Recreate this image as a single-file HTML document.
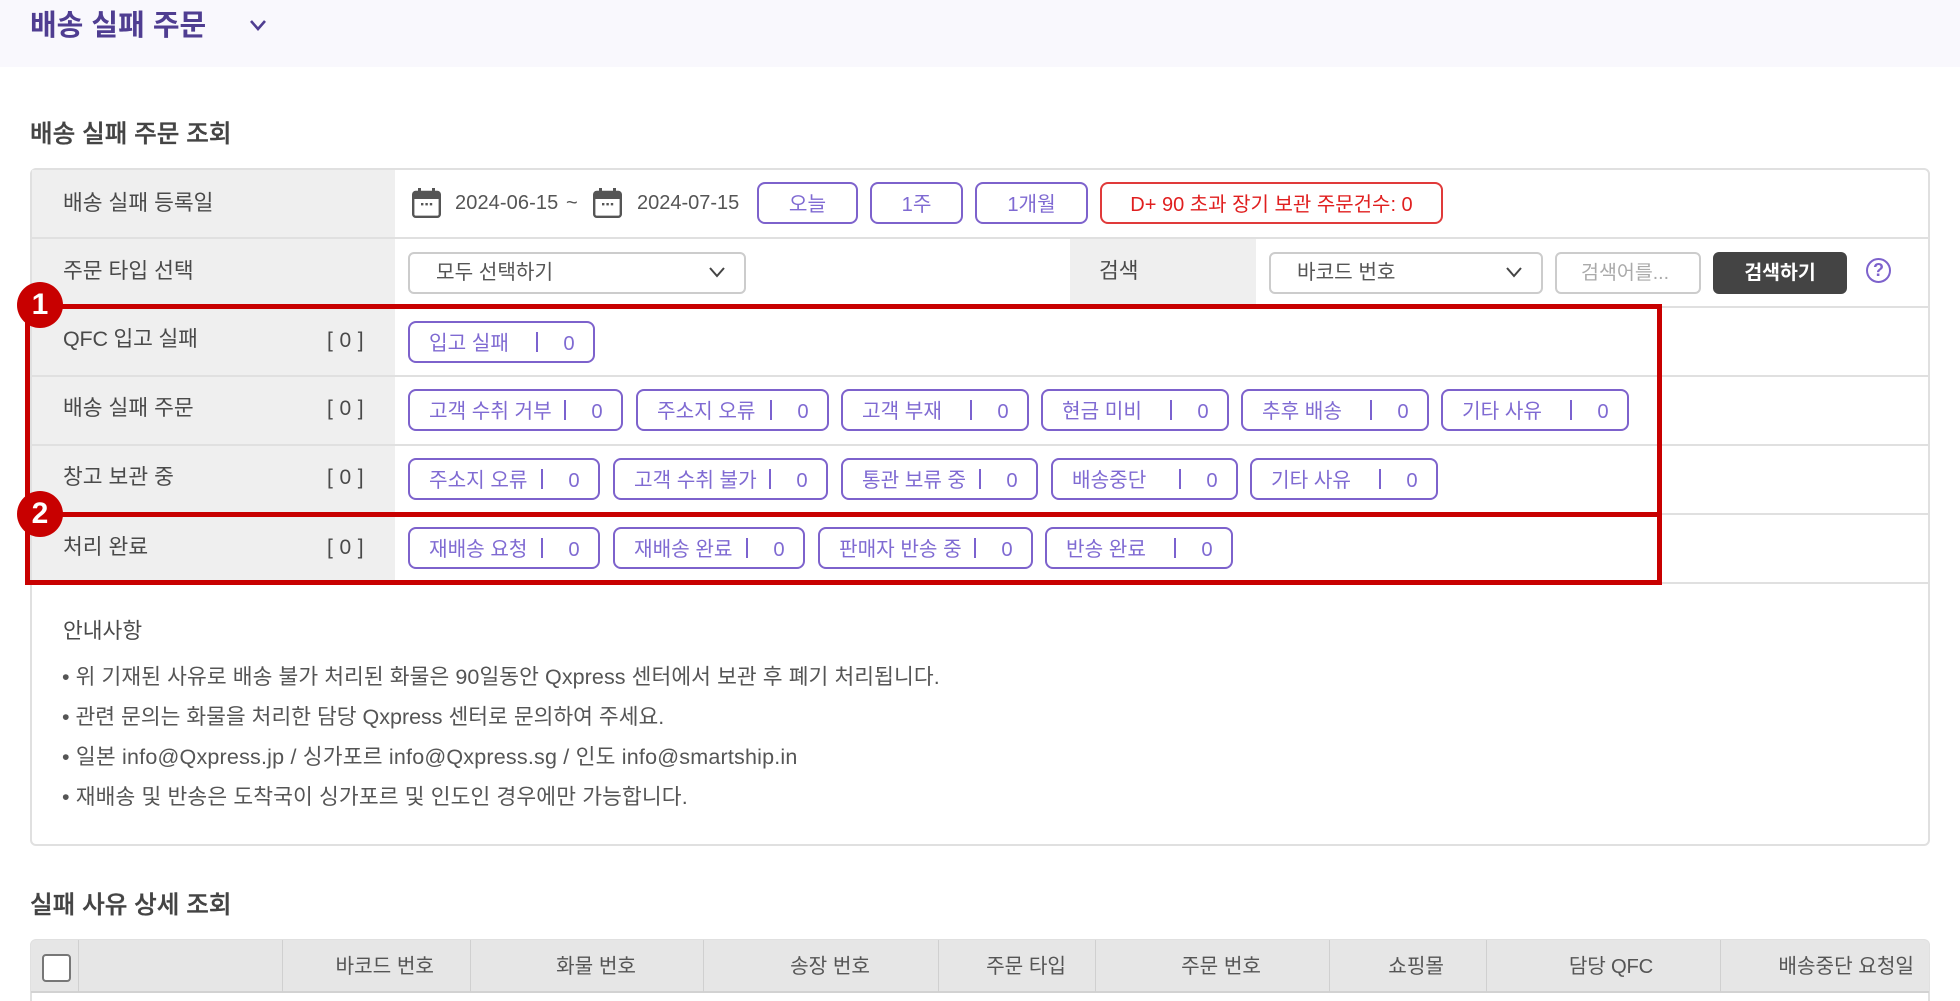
<!DOCTYPE html>
<html lang="ko"><head><meta charset="utf-8"><title>배송 실패 주문</title>
<style>
html,body{margin:0;padding:0;background:#fff;width:1960px;height:1001px;overflow:hidden}
body{position:relative;font-family:"Liberation Sans","Noto Sans CJK KR",sans-serif;color:#555}
div,span,b{position:absolute;box-sizing:border-box}
.t{white-space:nowrap;line-height:30px;height:30px;font-size:21.5px;color:#555}
.l{color:#4a4a4a}
.h{background:#efefef}
.ln{background:#e0e0e0;height:2px;left:31px;width:1898px}
.b{border:2px solid #7d62cc;border-radius:8px;height:42px;background:#fff;color:#7f6ad2;font-size:20.2px;line-height:42px;white-space:nowrap;padding-left:19px}
.b i{position:absolute;right:55px;top:9px;width:2px;height:20px;background:#7b62cf}
.b u{position:absolute;right:17px;top:0;text-decoration:none;width:14px;text-align:center}
.sel{border:2px solid #ccc;border-radius:6px;background:#fff;height:42px}
.c{left:0;width:46px;height:46px;border-radius:50%;background:#c80000;color:#fff;font-weight:bold;font-size:30px;line-height:46px;text-align:center}
.r{background:#c80000}
.th{top:940px;width:1px;height:52px;background:#d0d0d0}
.thx{top:952px;font-size:20.2px;color:#555}
.n{font-size:21.5px;color:#555;left:62px}
.s{font-size:24.6px;font-weight:500;color:#444;-webkit-text-stroke:.35px #444}
</style></head><body>

<div style="left:0;top:0;width:1960px;height:67px;background:#f9f8fd"></div>
<div class="t" style="left:30px;top:11px;font-size:29px;font-weight:bold;color:#4f3d91">배송 실패 주문</div>
<svg style="position:absolute;left:249px;top:18px" width="18" height="14" viewBox="0 0 18 14"><path d="M2 3l7 8 7-8" fill="none" stroke="#4f3d91" stroke-width="2.6"/></svg>

<div class="t s" style="left:30px;top:120px">배송 실패 주문 조회</div>

<div style="left:30px;top:168px;width:1900px;height:678px;border:2px solid #e0e0e0;border-radius:6px;background:#fff"></div>
<div class="h" style="left:32px;top:170px;width:363px;height:411px"></div>
<div class="h" style="left:1070px;top:239px;width:186px;height:67px"></div>
<div class="ln" style="top:237px"></div>
<div class="ln" style="top:306px"></div>
<div class="ln" style="top:375px"></div>
<div class="ln" style="top:444px"></div>
<div class="ln" style="top:513px"></div>
<div class="ln" style="top:582px"></div>

<div class="t l" style="left:63px;top:188px">배송 실패 등록일</div>
<div class="t l" style="left:63px;top:256px">주문 타입 선택</div>
<div class="t l" style="left:63px;top:324px;letter-spacing:-.2px">QFC 입고 실패</div>
<div class="t l" style="left:63px;top:393px">배송 실패 주문</div>
<div class="t l" style="left:63px;top:462px">창고 보관 중</div>
<div class="t l" style="left:63px;top:532px">처리 완료</div>
<div class="t l" style="left:327px;top:326px;letter-spacing:.4px;font-size:21px">[ 0 ]</div>
<div class="t l" style="left:327px;top:394px;letter-spacing:.4px;font-size:21px">[ 0 ]</div>
<div class="t l" style="left:327px;top:463px;letter-spacing:.4px;font-size:21px">[ 0 ]</div>
<div class="t l" style="left:327px;top:533px;letter-spacing:.4px;font-size:21px">[ 0 ]</div>

<svg style="position:absolute;left:412px;top:187px" width="29" height="31" viewBox="0 0 29 31"><rect x="1.2" y="5" width="26.6" height="24.8" rx="2.5" fill="#fff" stroke="#555" stroke-width="2.4"/><rect x="1" y="5" width="27" height="7" fill="#555"/><rect x="6" y="1" width="3" height="6" fill="#555"/><rect x="20" y="1" width="3" height="6" fill="#555"/><rect x="9" y="16" width="2.4" height="2.4" fill="#555"/><rect x="13.4" y="16" width="2.4" height="2.4" fill="#555"/><rect x="17.8" y="16" width="2.4" height="2.4" fill="#555"/></svg>
<div class="t" style="left:455px;top:188px;font-size:20px;letter-spacing:.1px;word-spacing:2px">2024-06-15 ~</div>
<svg style="position:absolute;left:593px;top:187px" width="29" height="31" viewBox="0 0 29 31"><rect x="1.2" y="5" width="26.6" height="24.8" rx="2.5" fill="#fff" stroke="#555" stroke-width="2.4"/><rect x="1" y="5" width="27" height="7" fill="#555"/><rect x="6" y="1" width="3" height="6" fill="#555"/><rect x="20" y="1" width="3" height="6" fill="#555"/><rect x="9" y="16" width="2.4" height="2.4" fill="#555"/><rect x="13.4" y="16" width="2.4" height="2.4" fill="#555"/><rect x="17.8" y="16" width="2.4" height="2.4" fill="#555"/></svg>
<div class="t" style="left:637px;top:188px;font-size:20px">2024-07-15</div>

<div class="b" style="left:757px;top:182px;width:101px;padding:0;text-align:center">오늘</div>
<div class="b" style="left:870px;top:182px;width:93px;padding:0;text-align:center">1주</div>
<div class="b" style="left:975px;top:182px;width:113px;padding:0;text-align:center">1개월</div>
<div class="b" style="left:1100px;top:182px;width:343px;padding:0;text-align:center;border-color:#e03a3a;color:#e01f1f;font-size:20px">D+ 90 초과 장기 보관 주문건수: 0</div>

<div class="sel t" style="left:408px;top:252px;width:338px;padding-left:26px;line-height:39px;height:42px;font-size:20.2px">모두 선택하기</div>
<svg style="position:absolute;left:708px;top:266px" width="18" height="13" viewBox="0 0 18 13"><path d="M2 2l7 8 7-8" fill="none" stroke="#444" stroke-width="2"/></svg>
<div class="t l" style="left:1099px;top:256px">검색</div>
<div class="sel t" style="left:1269px;top:252px;width:274px;padding-left:26px;line-height:39px;height:42px;font-size:20.2px">바코드 번호</div>
<svg style="position:absolute;left:1505px;top:266px" width="18" height="13" viewBox="0 0 18 13"><path d="M2 2l7 8 7-8" fill="none" stroke="#444" stroke-width="2"/></svg>
<div class="sel t" style="left:1555px;top:252px;width:146px;padding-left:24px;line-height:39px;height:42px;color:#aaa;font-size:19.5px">검색어를...</div>
<div class="t" style="left:1713px;top:252px;width:134px;height:42px;background:#444;border-radius:6px;color:#fff;font-weight:bold;text-align:center;line-height:43px;font-size:19.4px">검색하기</div>
<div style="left:1866px;top:258px;width:25px;height:25px;border:2px solid #7d62cc;border-radius:50%;color:#7d62cc;font-size:18px;font-weight:bold;line-height:21px;text-align:center">?</div>

<div class="b" style="left:408px;top:321px;width:187px">입고 실패<i></i><u>0</u></div>

<div class="b" style="left:408px;top:389px;width:215px">고객 수취 거부<i></i><u>0</u></div>
<div class="b" style="left:636px;top:389px;width:193px">주소지 오류<i></i><u>0</u></div>
<div class="b" style="left:841px;top:389px;width:188px">고객 부재<i></i><u>0</u></div>
<div class="b" style="left:1041px;top:389px;width:188px">현금 미비<i></i><u>0</u></div>
<div class="b" style="left:1241px;top:389px;width:188px">추후 배송<i></i><u>0</u></div>
<div class="b" style="left:1441px;top:389px;width:188px">기타 사유<i></i><u>0</u></div>

<div class="b" style="left:408px;top:458px;width:192px">주소지 오류<i></i><u>0</u></div>
<div class="b" style="left:613px;top:458px;width:215px">고객 수취 불가<i></i><u>0</u></div>
<div class="b" style="left:841px;top:458px;width:197px">통관 보류 중<i></i><u>0</u></div>
<div class="b" style="left:1051px;top:458px;width:187px">배송중단<i></i><u>0</u></div>
<div class="b" style="left:1250px;top:458px;width:188px">기타 사유<i></i><u>0</u></div>

<div class="b" style="left:408px;top:527px;width:192px">재배송 요청<i></i><u>0</u></div>
<div class="b" style="left:613px;top:527px;width:192px">재배송 완료<i></i><u>0</u></div>
<div class="b" style="left:818px;top:527px;width:215px">판매자 반송 중<i></i><u>0</u></div>
<div class="b" style="left:1045px;top:527px;width:188px">반송 완료<i></i><u>0</u></div>

<div class="r" style="left:25px;top:304px;width:1637px;height:5px"></div>
<div class="r" style="left:25px;top:512px;width:1637px;height:5px"></div>
<div class="r" style="left:25px;top:580px;width:1637px;height:5px"></div>
<div class="r" style="left:25px;top:304px;width:5px;height:281px"></div>
<div class="r" style="left:1657px;top:304px;width:5px;height:281px"></div>
<div class="c" style="left:17px;top:282px">1</div>
<div class="c" style="left:17px;top:491px">2</div>

<div class="t l" style="left:63px;top:616px">안내사항</div>
<div class="t n" style="top:662px;letter-spacing:.07px">• 위 기재된 사유로 배송 불가 처리된 화물은 90일동안 Qxpress 센터에서 보관 후 폐기 처리됩니다.</div>
<div class="t n" style="top:702px">• 관련 문의는 화물을 처리한 담당 Qxpress 센터로 문의하여 주세요.</div>
<div class="t n" style="top:742px;letter-spacing:.2px">• 일본 info@Qxpress.jp / 싱가포르 info@Qxpress.sg / 인도 info@smartship.in</div>
<div class="t n" style="top:782px;letter-spacing:.12px">• 재배송 및 반송은 도착국이 싱가포르 및 인도인 경우에만 가능합니다.</div>

<div class="t s" style="left:30px;top:891px">실패 사유 상세 조회</div>

<div style="left:30px;top:939px;width:1900px;height:80px;border:2px solid #e0e0e0;border-radius:6px;background:#fff"></div>
<div style="left:31px;top:940px;width:1898px;height:53px;background:#e6e6e6;border-bottom:2px solid #d2d2d2;border-radius:5px 5px 0 0"></div>
<div class="th" style="left:78px"></div>
<div class="th" style="left:282px"></div>
<div class="th" style="left:470px"></div>
<div class="th" style="left:703px"></div>
<div class="th" style="left:938px"></div>
<div class="th" style="left:1095px"></div>
<div class="th" style="left:1329px"></div>
<div class="th" style="left:1486px"></div>
<div class="th" style="left:1720px"></div>
<div style="left:42px;top:954px;width:29px;height:28px;border:2px solid #777;border-radius:4px;background:#fff"></div>
<div class="t thx" style="right:1526px">바코드 번호</div>
<div class="t thx" style="right:1324px">화물 번호</div>
<div class="t thx" style="right:1090px">송장 번호</div>
<div class="t thx" style="right:894px">주문 타입</div>
<div class="t thx" style="right:699px">주문 번호</div>
<div class="t thx" style="right:516px">쇼핑몰</div>
<div class="t thx" style="right:307px;letter-spacing:-.2px">담당 QFC</div>
<div class="t thx" style="right:46px">배송중단 요청일</div>

</body></html>
